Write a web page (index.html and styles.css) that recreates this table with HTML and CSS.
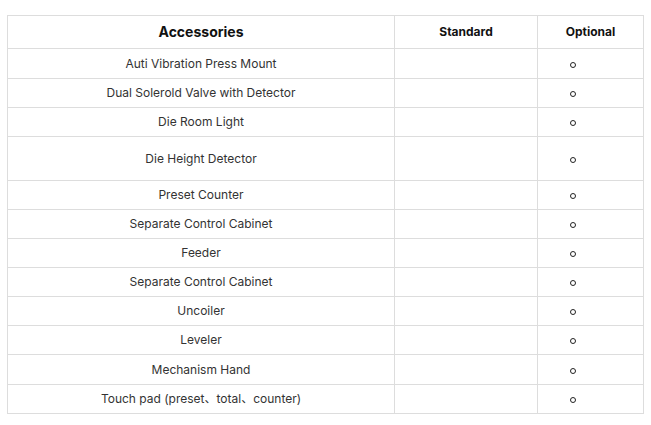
FILE: index.html
```html
<!DOCTYPE html>
<html>
<head>
<meta charset="utf-8">
<link rel="stylesheet" href="styles.css">
</head>
<body>
<div class="wrap">
<table class="spec">
  <colgroup><col class="c1"><col class="c2"><col class="c3"></colgroup>
  <thead>
    <tr class="head"><th class="main">Accessories</th><th>Standard</th><th>Optional</th></tr>
  </thead>
  <tbody>
    <tr class="r30"><td>Auti Vibration Press Mount</td><td></td><td class="opt"><span class="dot"></span></td></tr>
    <tr><td>Dual Solerold Valve with Detector</td><td></td><td class="opt"><span class="dot"></span></td></tr>
    <tr><td>Die Room Light</td><td></td><td class="opt"><span class="dot"></span></td></tr>
    <tr class="tall"><td>Die Height Detector</td><td></td><td class="opt"><span class="dot"></span></td></tr>
    <tr><td>Preset Counter</td><td></td><td class="opt"><span class="dot"></span></td></tr>
    <tr><td>Separate Control Cabinet</td><td></td><td class="opt"><span class="dot"></span></td></tr>
    <tr><td>Feeder</td><td></td><td class="opt"><span class="dot"></span></td></tr>
    <tr><td>Separate Control Cabinet</td><td></td><td class="opt"><span class="dot"></span></td></tr>
    <tr><td>Uncoiler</td><td></td><td class="opt"><span class="dot"></span></td></tr>
    <tr><td>Leveler</td><td></td><td class="opt"><span class="dot"></span></td></tr>
    <tr class="r30"><td>Mechanism Hand</td><td></td><td class="opt"><span class="dot"></span></td></tr>
    <tr><td>Touch pad (preset、total、counter)</td><td></td><td class="opt"><span class="dot"></span></td></tr>
  </tbody>
</table>
</div>
</body>
</html>
```

FILE: styles.css
```css
html, body {
  margin: 0;
  padding: 0;
  background: #fff;
}
.wrap {
  padding: 15px 0 0 7px;
}
.spec {
  border-collapse: collapse;
  width: 636px;
  table-layout: fixed;
  font-family: Inter, "Noto Sans CJK SC", sans-serif;
  color: #333;
}
.c1 { width: 387px; }
.c2 { width: 143px; }
.c3 { width: 106px; }
.spec th, .spec td {
  border: 1px solid #dddddd;
  text-align: center;
  vertical-align: middle;
  padding: 0 0 1px 0;
  line-height: 15px;
}
.spec td {
  font-size: 12px;
  height: 27px;
}
.spec th {
  font-size: 12px;
  font-weight: 700;
  color: #111;
  height: 31px;
}
.spec th.main {
  font-size: 14px;
}
.spec tr.r30 td { height: 28px; }
.spec tr.tall td { height: 42px; }
.opt {
  line-height: 0;
}
.dot {
  display: inline-block;
  width: 4px;
  height: 4px;
  border: 1px solid #222;
  border-radius: 50%;
  margin-right: 36px;
}
```
